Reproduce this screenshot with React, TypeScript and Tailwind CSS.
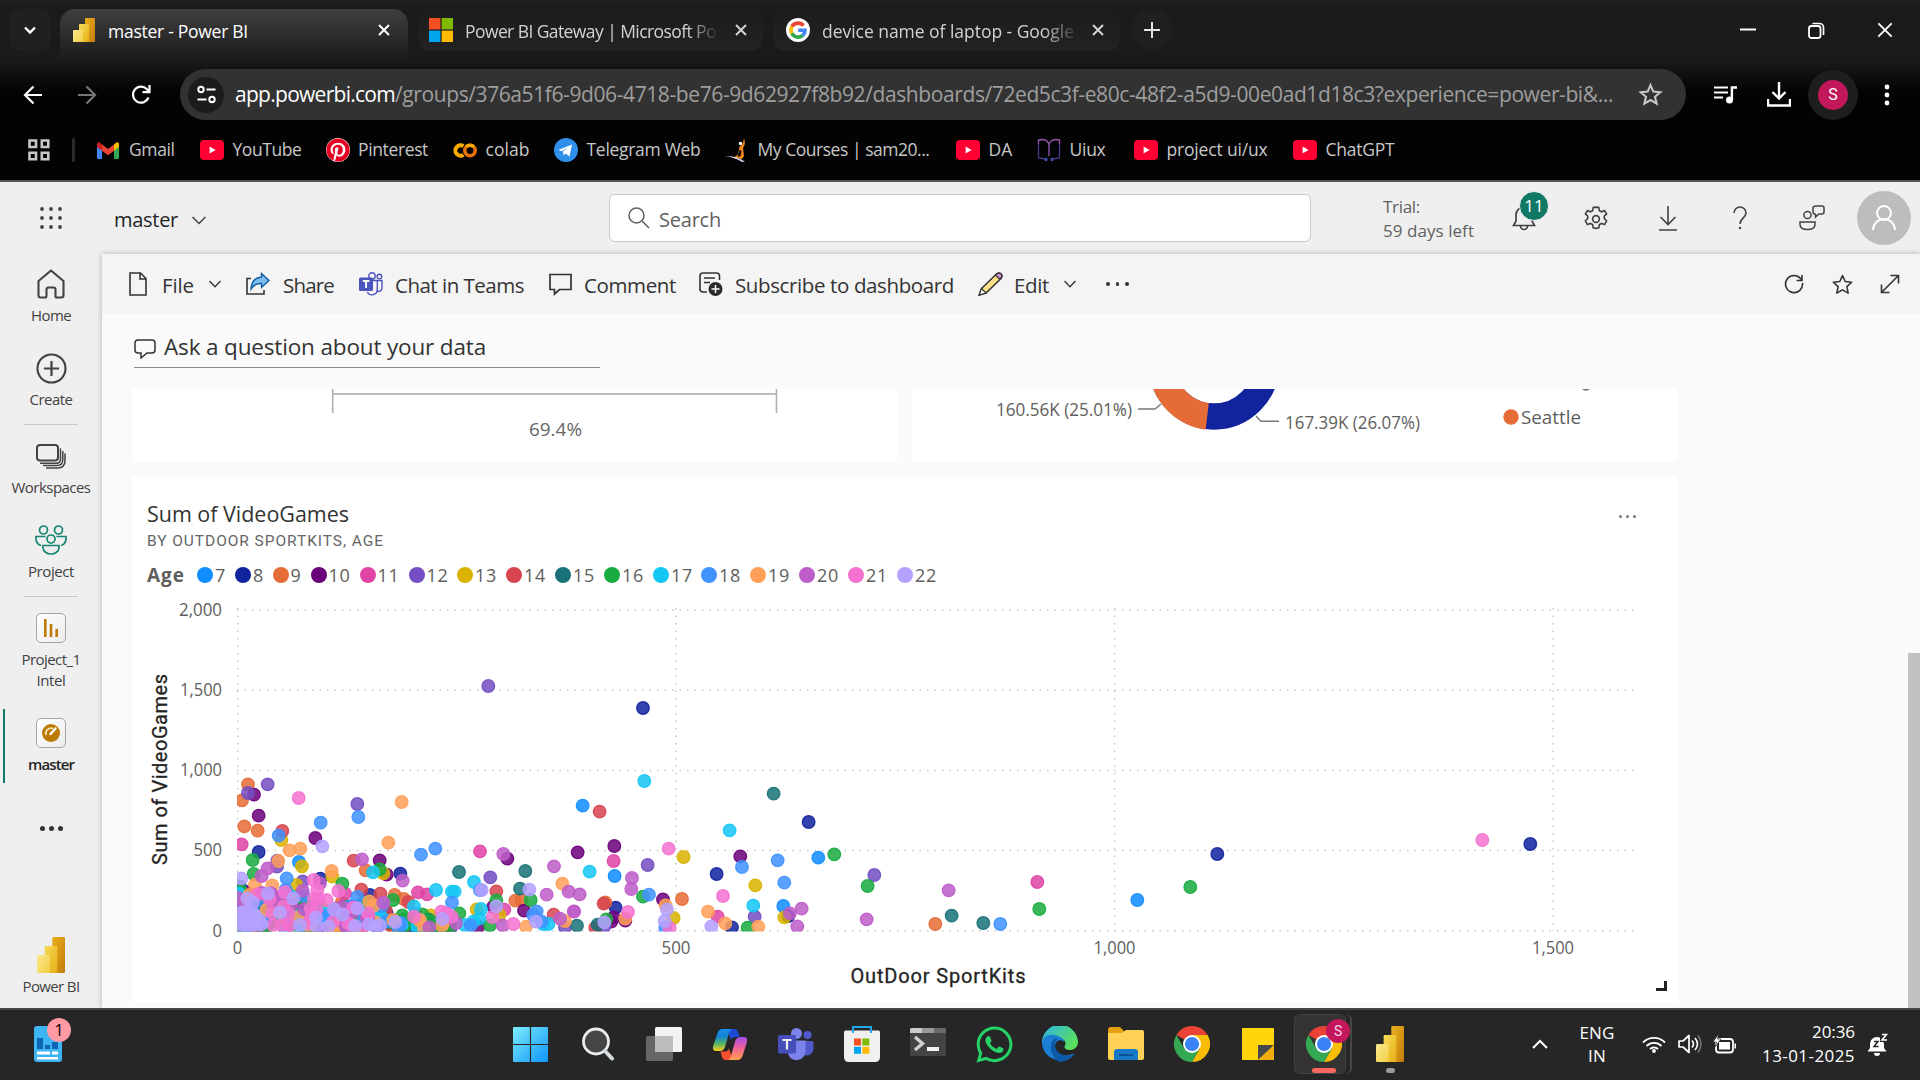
import React, { useLayoutEffect, useRef, useState } from "react";
import { FaPinterest, FaWhatsapp } from "react-icons/fa";

/* Text set to an exact advance width by spreading the difference over its letters. */
function Fit({ w, className = "", children }: { w: number; className?: string; children: string }) {
  const ref = useRef<HTMLSpanElement>(null);
  const [spacing, setSpacing] = useState(0);
  useLayoutEffect(() => {
    if (ref.current) setSpacing((w - ref.current.getBoundingClientRect().width) / children.length);
  }, []);
  return (
    <span className={"block shrink-0 whitespace-nowrap " + className} style={{ width: w }}>
      <span ref={ref} style={{ letterSpacing: spacing }}>{children}</span>
    </span>
  );
}

type IconProps = { size?: number; w?: number; h?: number; vb?: string; className?: string; children: React.ReactNode };
function Icon({ size = 24, w, h, vb = "0 0 24 24", className = "", children }: IconProps) {
  return (
    <svg width={w ?? size} height={h ?? size} viewBox={vb} className={"block shrink-0 " + className} fill="none" stroke="currentColor" strokeWidth="1.6">
      {children}
    </svg>
  );
}

function PowerBI({ w, h, className = "" }: { w: number; h: number; className?: string }) {
  return (
    <svg width={w} height={h} viewBox="0 0 22 28" preserveAspectRatio="none" className={"block shrink-0 " + className}>
      <defs>
        <linearGradient id="pb1" x1="0" y1="0" x2="1" y2="1"><stop stopColor="#e9b01b" /><stop offset="1" stopColor="#c47b0c" /></linearGradient>
        <linearGradient id="pb2" x1="0" y1="0" x2="1" y2="1"><stop stopColor="#f7db57" /><stop offset="1" stopColor="#e5ad16" /></linearGradient>
        <linearGradient id="pb3" x1="0" y1="0" x2="1" y2="1"><stop stopColor="#fae98e" /><stop offset="1" stopColor="#f2cf45" /></linearGradient>
      </defs>
      <rect x="12" width="10" height="28" rx="1" fill="url(#pb1)" />
      <path d="M7 7h8q1 0 1 1v20H6V8q0-1 1-1z" fill="url(#pb2)" />
      <path d="M1 14h8q1 0 1 1v13H1q-1 0-1-1V15q0-1 1-1z" fill="url(#pb3)" />
    </svg>
  );
}

function MsLogo({ size, className = "" }: { size: number; className?: string }) {
  return (
    <svg width={size} height={size} viewBox="0 0 24 24" className={"block shrink-0 " + className}>
      <path fill="#f25022" d="M0 0h11.4v11.4H0z" /><path fill="#7fba00" d="M12.6 0H24v11.4H12.6z" />
      <path fill="#00a4ef" d="M0 12.6h11.4V24H0z" /><path fill="#ffb900" d="M12.6 12.6H24V24H12.6z" />
    </svg>
  );
}

function GoogleG({ className = "" }) {
  return (
    <svg width="24" height="24" viewBox="0 0 24 24" className={"block shrink-0 " + className}>
      <circle cx="12" cy="12" r="12" fill="#fff" />
      <g fill="none" strokeWidth="3.6">
        <path d="M17.4 7.6A7.1 7.1 0 0 0 5.9 8.6" stroke="#ea4335" />
        <path d="M5.9 8.5a7.1 7.1 0 0 0 0 7" stroke="#fbbc05" />
        <path d="M5.9 15.4a7.1 7.1 0 0 0 10.9 2" stroke="#34a853" />
        <path d="M16.7 17.5A7 7 0 0 0 19 12.2h-6.8" stroke="#4285f4" />
      </g>
    </svg>
  );
}

function Chrome({ size }: { size: number }) {
  return (
    <svg width={size} height={size} viewBox="0 0 48 48" className="block shrink-0">
      <path d="M24 24 3.2 12A24 24 0 0 1 44.8 12z" fill="#ea4335" />
      <path d="M24 12H44.8A24 24 0 0 1 24 48L34.4 30z" fill="#fbbc04" />
      <path d="M3.2 12A24 24 0 0 0 24 48L34.4 30 24 34 13.6 30z" fill="#34a853" />
      <circle cx="24" cy="24" r="12" fill="#fff" /><circle cx="24" cy="24" r="9.4" fill="#3b82f6" />
    </svg>
  );
}

function YouTube() {
  return (
    <svg width="24" height="20" viewBox="0 0 24 20" className="block shrink-0">
      <rect width="24" height="20" rx="4" fill="#ff0033" /><path d="m9.6 6.500 6 3.500-6 3.500z" fill="#fff" />
    </svg>
  );
}

function TeamsGlyph({ size, tone = "#4b53bc" }: { size: number; tone?: string }) {
  return (
    <svg width={size} height={size} viewBox="0 0 24 24" className="block shrink-0">
      <g fill="none" stroke={tone} strokeWidth="1.4">
        <circle cx="13" cy="4" r="3.2" /><circle cx="20.4" cy="4.6" r="2.3" />
        <path d="M14 8.5h4.3v9a5.3 5.3 0 0 1-10 2.5M18.3 8.5H23V16a3.5 3.5 0 0 1-4.7 3.2" />
      </g>
      <rect y="5.5" width="14" height="13.5" rx="1.5" fill={tone} />
      <path d="M3.8 9h6.600M7.100 9v7" stroke="#fff" strokeWidth="1.9" />
    </svg>
  );
}

/* ---------------------------------------------------------------- browser */

const X = ({ size = 12, sw = 2 }) => (
  <Icon size={size} vb="0 0 12 12"><path d="m1 1 10 10M11 1 1 11" strokeWidth={sw} /></Icon>
);

function TabStrip() {
  return (
    <div className="flex h-[60px] items-start pt-[9px] text-[17.5px] leading-[45px]">
      <div className="ml-[9px] flex h-[42px] w-[42px] items-center justify-center rounded-xl bg-[#202020] text-white">
        <Icon w={14} h={9} vb="0 0 14 9"><path d="m2 1.500 5 5 5-5" strokeWidth="2.4" /></Icon>
      </div>
      <div className="ml-[9px] flex h-[51px] w-[348px] rounded-t-[15px] bg-gradient-to-b from-[#404040] to-[#1b1b1b]">
        <PowerBI w={22} h={24} className="ml-[13px] mt-[9px]" />
        <Fit w={140} className="ml-[13px] text-white">master - Power BI</Fit>
        <div className="ml-[130px] mt-[15px] text-white"><X /></div>
      </div>
      <div className="ml-[10px] flex h-[42px] w-[345px] rounded-xl bg-gradient-to-b from-[#1c1c1c] to-[#222] text-[#d2d2d2]">
        <MsLogo size={24} className="ml-[11px] mt-[9px]" />
        <div className="ml-3 w-[252px] [mask-image:linear-gradient(to_right,black_222px,transparent_254px)]">
          <Fit w={251}>Power BI Gateway | Microsoft Po</Fit>
        </div>
        <div className="ml-[18px] mt-[15px]"><X /></div>
      </div>
      <div className="ml-[10px] flex h-[42px] w-[347px] rounded-xl bg-gradient-to-b from-[#1c1c1c] to-[#222] text-[#d2d2d2]">
        <GoogleG className="ml-[13px] mt-[9px]" />
        <div className="ml-3 w-[254px] [mask-image:linear-gradient(to_right,black_220px,transparent_258px)]">
          <Fit w={252}>device name of laptop - Google</Fit>
        </div>
        <div className="ml-[16px] mt-[15px]"><X /></div>
      </div>
      <div className="ml-[12px] flex h-[42px] w-[40px] items-center justify-center rounded-full bg-[#1f1f1f] text-[#e3e3e3]">
        <Icon size={16} vb="0 0 16 16"><path d="M8 0v16M0 8h16" strokeWidth="2" /></Icon>
      </div>
      <div className="ml-auto mr-[27px] flex h-[42px] items-center text-white">
        <Icon size={16} vb="0 0 16 16" className="mr-[52px]"><path d="M0 7.500h16" strokeWidth="2" /></Icon>
        <Icon size={17} vb="0 0 17 17" className="mr-[52px]">
          <rect x="1" y="4" width="11.5" height="12" rx="2.5" strokeWidth="1.8" />
          <path d="M4.500 1.500h7a4 4 0 0 1 4 4V13" strokeWidth="1.7" />
        </Icon>
        <X size={16} sw={1.4} />
      </div>
    </div>
  );
}

function Toolbar() {
  return (
    <div className="mt-[9px] flex h-[51px] items-center text-white">
      <Icon size={20} vb="0 0 20 20" className="ml-[23px]"><path d="M19 10H2m8.500-8.500L2 10l8.500 8.500" strokeWidth="2.2" /></Icon>
      <Icon size={20} vb="0 0 20 20" className="ml-[34px] text-[#757575]"><path d="M1 10h17M9.500 1.500 18 10l-8.500 8.500" strokeWidth="2.2" /></Icon>
      <Icon size={20} vb="0 0 20 20" className="ml-[34px]"><path d="M17.500 12.500a8 8 0 1 1-1.600-8.300L18 6.500M18.500 0v7.200h-7" strokeWidth="2.2" /></Icon>
      <div className="ml-[29px] flex h-[51px] w-[1506px] items-center rounded-full bg-[#323232]">
        <div className="ml-2 flex h-9 w-9 items-center justify-center rounded-full bg-[#1c1c1c]">
          <Icon size={19} vb="0 0 19 19"><g strokeWidth="2"><circle cx="4" cy="4.5" r="2.7" /><path d="M9.500 4.500h9M.5 14.500h9" /><circle cx="15" cy="14.5" r="2.7" /></g></Icon>
        </div>
        <Fit w={160} className="ml-[11px] pt-px text-[21px]">app.powerbi.com</Fit>
        <Fit w={1218} className="pt-px text-[21px] text-[#9e9e9e]">/groups/376a51f6-9d06-4718-be76-9d62927f8b92/dashboards/72ed5c3f-e80c-48f2-a5d9-00e0ad1d18c3?experience=power-bi&...</Fit>
        <Icon size={25} className="ml-[25px] text-[#c7c7c7]"><path d="m12 3 2.700 6.200 6.700.6-5.100 4.400 1.600 6.600L12 17.300l-5.900 3.500 1.600-6.600-5.100-4.400 6.700-.6z" strokeWidth="2" /></Icon>
      </div>
      <Icon w={24} h={20} vb="0 0 24 20" className="ml-[28px]">
        <path d="M0 2.500h14M0 7.500h14M0 12.500h9" strokeWidth="2.2" /><circle cx="15.5" cy="15" r="3.5" fill="currentColor" stroke="none" /><path d="M17.900 15V2.500H23" strokeWidth="2.4" />
      </Icon>
      <Icon w={24} h={25} vb="0 0 24 25" className="ml-[29px]"><path d="M12 0v16M5.500 10 12 16.500 18.500 10M1 17v6.500h22V17" strokeWidth="2.4" /></Icon>
      <div className="ml-[17px] flex h-[50px] w-[50px] items-center justify-center rounded-full bg-[#1e1e1e]">
        <div className="flex h-[30px] w-[30px] items-center justify-center rounded-full bg-[#c2185b] font-[Roboto] text-[16px]">S</div>
      </div>
      <Icon w={6} h={22} vb="0 0 6 22" className="ml-[26px]"><g fill="currentColor" stroke="none"><circle cx="3" cy="3" r="2.4" /><circle cx="3" cy="11" r="2.4" /><circle cx="3" cy="19" r="2.4" /></g></Icon>
    </div>
  );
}

function Bookmark({ ml, gap, w, icon, children }: { ml: number; gap: number; w: number; icon: React.ReactNode; children: string }) {
  return (
    <div className="flex shrink-0 items-center" style={{ marginLeft: ml, gap }}>
      {icon}
      <Fit w={w} className="pb-0.5">{children}</Fit>
    </div>
  );
}

function Bookmarks() {
  return (
    <div className="flex h-[60px] items-center text-[17.5px] text-[#c7c7c7]">
      <Icon size={22} vb="0 0 22 22" className="ml-7"><g strokeWidth="2.6"><path d="M1.500 1.500h6.500V8H1.500zM13.800 1.500h6.500V8h-6.500zM1.500 13.800h6.500v6.500H1.500zM13.800 13.800h6.500v6.500h-6.500z" /></g></Icon>
      <div className="ml-[22px] h-6 w-[3px] rounded bg-[#2b2b2b]" />
      <Bookmark ml={22} gap={10} w={45.5} icon={
        <svg width="22" height="17" viewBox="0 0 22 17"><path d="M0 2v13.500Q0 17 1.500 17H5V7z" fill="#4285f4" /><path d="M22 2v13.500q0 1.500-1.500 1.500H17V7z" fill="#34a853" /><path d="M17 2.500 19 .8q3-1.500 3 2V5l-5 3.700z" fill="#fbbc04" /><path d="M5 8.700V2.500l6 4.600 6-4.600v6.200l-6 4.600z" fill="#ea4335" /><path d="M0 5V2.800q0-3.500 3-2l2 1.700v6.200z" fill="#c5221f" /></svg>
      }>Gmail</Bookmark>
      <Bookmark ml={25.5} gap={8.5} w={69} icon={<YouTube />}>YouTube</Bookmark>
      <Bookmark ml={24} gap={8.5} w={70} icon={<div className="rounded-full bg-white"><FaPinterest size={24} color="#e60023" /></div>}>Pinterest</Bookmark>
      <Bookmark ml={24.5} gap={9} w={44} icon={
        <Icon w={24} h={15} vb="0 0 24 15"><path d="M10.500 3.200a5.200 5.200 0 1 0 0 8.600" stroke="#f9ab00" strokeWidth="4" /><circle cx="17" cy="7.5" r="5.2" stroke="#e8710a" strokeWidth="3.6" /><path d="M13.300 3.800a5.200 5.200 0 0 1 7.400 0" stroke="#f9ab00" strokeWidth="3.6" /></Icon>
      }>colab</Bookmark>
      <Bookmark ml={24.5} gap={8.5} w={114} icon={
        <svg width="24" height="24" viewBox="0 0 24 24"><circle cx="12" cy="12" r="12" fill="#2f8feb" /><path d="m4.500 12 13.500-5.500-2.500 12-4-3-2 2-.5-4 5-4-6.500 3.700z" fill="#fff" /></svg>
      }>Telegram Web</Bookmark>
      <Bookmark ml={24} gap={9} w={172} icon={
        <svg width="24" height="24" viewBox="0 0 24 24"><path d="M19 0q2 6-1 10l1 8-2 3-9-1 5-3.500 1.500-8q3-1 3.500-4z" fill="#f0851c" /><path d="m14.500 12 2 1-1 5-3 1z" fill="#050505" /><circle cx="15.5" cy="5.5" r="1.7" fill="#fff" /><path d="M0 18.500q10-1 20 5l-3 .5Q8 18.500 0 18.500z" fill="#d5d0ee" /></svg>
      }>My Courses | sam20...</Bookmark>
      <Bookmark ml={26} gap={9} w={24} icon={<YouTube />}>DA</Bookmark>
      <Bookmark ml={24} gap={9} w={36} icon={
        <Icon size={24}><g strokeWidth="1.3"><path d="M9 21 1.500 20V2Q9 0 12 6q3-6 10.500-4v18L15 21" stroke="#4a3a8a" /><path d="M12 6v12" stroke="#7d4d9c" strokeWidth="1.5" /><path d="M1.500 6V2Q9 0 12 6q3-6 10.500-4v4" stroke="#8a4f98" /><circle cx="9" cy="21.5" r="1" stroke="#3f51b5" /><circle cx="15" cy="21.5" r="1" stroke="#3f51b5" /></g></Icon>
      }>Uiux</Bookmark>
      <Bookmark ml={28} gap={9} w={101} icon={<YouTube />}>project ui/ux</Bookmark>
      <Bookmark ml={25} gap={9} w={69} icon={<YouTube />}>ChatGPT</Bookmark>
    </div>
  );
}

/* ---------------------------------------------------------------- Power BI */

function AppHeader() {
  return (
    <header className="flex h-[72px] items-center text-[#424242]">
      <Icon size={22} vb="0 0 22 22" className="ml-10">
        <g fill="currentColor" stroke="none">
          {[2, 11, 20].map((y) => [2, 11, 20].map((x) => <circle key={x + "-" + y} cx={x} cy={y} r="1.9" />))}
        </g>
      </Icon>
      <Fit w={64} className="ml-[52px] pt-1 text-[20px] text-[#242424]">master</Fit>
      <Icon w={14} h={9} vb="0 0 14 9" className="ml-[14px] mt-1"><path d="m.6 1 6.400 6.500L13.400 1" strokeWidth="1.5" /></Icon>
      <div className="ml-[403px] flex h-[48px] w-[702px] items-center rounded-[6px] border border-[#c9c9c9] bg-white text-[#616161]">
        <Icon size={22} vb="0 0 22 22" className="ml-[18px]"><circle cx="8.5" cy="8.5" r="7.5" strokeWidth="1.5" /><path d="m14 14 7 7" strokeWidth="1.6" /></Icon>
        <Fit w={62} className="ml-[9px] pt-1 text-[20px]">Search</Fit>
      </div>
      <div className="ml-[72px] w-[92px] pt-0.5 text-[17px] leading-6 text-[#616161]">
        <Fit w={37}>Trial:</Fit>
        <Fit w={91}>59 days left</Fit>
      </div>
      <div className="relative ml-[36px]">
        <Icon w={26} h={30} vb="0 0 26 30"><path d="M2.500 22.500 5 18v-6a8 8 0 0 1 16 0v6l2.500 4.500zM9.500 23a3.500 3.500 0 0 0 7 0" strokeWidth="1.7" /></Icon>
        <div className="absolute left-[8px] top-[-12px] flex h-[30px] w-[30px] items-center justify-center rounded-full border border-[#f0f0f0] bg-[#117865] text-[17px] text-white">11</div>
      </div>
      <Icon size={28} className="ml-[45px] mt-px"><path strokeWidth="1.4" d="m12 1.800 2.400.3.500 2.700 1.800 1 2.500-1 1.900 2.800-2 2v2l2 2.100-1.700 3-2.600-.9-1.900 1-.5 2.800-2.400.4-2.400-.4-.5-2.800-1.900-1-2.600.9-1.700-3 2-2.100v-2l-2-2 1.900-2.800 2.500 1 1.800-1 .5-2.700z" /><circle cx="12" cy="12" r="2.9" strokeWidth="1.4" /></Icon>
      <Icon w={20} h={26} vb="0 0 20 26" className="ml-[48px]"><path d="M10 1v18M2.500 12l7.500 7.500 7.500-7.500M1 25h18" strokeWidth="1.6" /></Icon>
      <Icon w={14} h={24} vb="0 0 14 24" className="ml-[55px]"><path d="M1 7a6 6 0 0 1 12 0c0 4.500-6 5.500-6 11" strokeWidth="1.6" /><circle cx="7" cy="22" r="1.2" fill="currentColor" stroke="none" /></Icon>
      <Icon size={26} vb="0 0 26 26" className="ml-[52px]"><g strokeWidth="1.5"><circle cx="8.5" cy="10" r="3.6" /><path d="M1 17h15v2.500c0 3-3 5-7.500 5S1 22.500 1 19.500zM17 1h6q2 0 2 2v4q0 2-2 2h-3l-3.500 3V9.300Q14 9 14 7V3q0-2 3-2z" /></g></Icon>
      <div className="ml-[32px] flex h-[54px] w-[54px] items-center justify-center rounded-full bg-[#bdbdbd] text-white">
        <Icon w={24} h={26} vb="0 0 24 26"><circle cx="12" cy="8" r="7" strokeWidth="1.9" /><path d="M1 25a11 11 0 0 1 22 0" strokeWidth="1.9" /></Icon>
      </div>
    </header>
  );
}

function NavItem({ icon, label, w, className = "", bold = false }: { icon: React.ReactNode; label: string; w: number; className?: string; bold?: boolean }) {
  return (
    <div className={"flex w-[102px] flex-col items-center " + className}>
      <div className="flex h-8 items-center">{icon}</div>
      <Fit w={w} className={bold ? "text-[15px] leading-[30px] font-semibold text-[#242424]" : "text-[15px] leading-[30px]"}>{label}</Fit>
    </div>
  );
}

const Square = ({ children }: { children: React.ReactNode }) => (
  <div className="flex h-[30px] w-[30px] items-center justify-center rounded-[5px] border-[1.5px] border-[#a5a5a5] bg-gradient-to-br from-white to-[#ececec]">{children}</div>
);

function Sidebar() {
  return (
    <nav className="flex w-[102px] flex-col items-center pt-[14px] text-[#424242]">
      <NavItem w={40} label="Home" icon={<Icon size={30} vb="0 0 30 30" className="-mt-px"><path d="M2.500 12 15 1.500 27.500 12v14.500q0 2-2 2H21q-1.500 0-1.500-1.500v-6.500q0-2-2-2h-5q-2 0-2 2V27q0 1.500-1.500 1.500H4.500q-2 0-2-2z" strokeWidth="2.1" strokeLinejoin="round" /></Icon>} />
      <NavItem w={43} label="Create" className="mt-[22px]" icon={<Icon size={31} vb="0 0 31 31"><circle cx="15.5" cy="15.5" r="14" strokeWidth="2.1" /><path d="M15.500 8v15M8 15.500h15" strokeWidth="2.2" /></Icon>} />
      <div className="mt-[10px] h-px w-[54px] bg-[#c8c8c8]" />
      <NavItem w={79} label="Workspaces" className="mt-[15px]" icon={<Icon w={30} h={25} vb="0 0 30 25"><rect x="1" y="1" width="21" height="15.5" rx="3" strokeWidth="2" /><path d="M24.500 4.500v10.500q0 4.300-4 4.300H4M26.800 7v8.500q0 6-6 6H7M29 9.500v7q0 7.500-7.500 7.500H10" strokeWidth="1.5" /></Icon>} />
      <NavItem w={46} label="Project" className="mt-[22px]" icon={
        <Icon w={32} h={30} vb="0 0 32 30" className="text-[#168573]"><g strokeWidth="1.7"><circle cx="8.5" cy="5" r="4" /><circle cx="23.5" cy="5" r="4" /><circle cx="16" cy="14" r="4" /><path d="M8 20.500h16v2c0 4-4 6.500-8 6.500s-8-2.500-8-6.500zM10.500 11.500H1c-.5 4.500 1.500 8.500 5 9M21.500 11.500H31c.5 4.500-1.500 8.500-5 9" /></g></Icon>} />
      <div className="mt-[10px] h-px w-[54px] bg-[#c8c8c8]" />
      <div className="mt-[15px] flex flex-col items-center text-[15px] leading-[21px]">
        <div className="flex h-8 items-center"><Square><Icon w={14} h={18} vb="0 0 14 18" className="text-[#bd7a06]"><path d="M1.300 0v18M7 5v13M12.700 10v8" strokeWidth="2.6" /></Icon></Square></div>
        <Fit w={59} className="mt-[5px]">Project_1</Fit>
        <Fit w={29}>Intel</Fit>
      </div>
      <div className="relative mt-[26px]">
        <div className="absolute left-[3px] top-[-8px] h-[74px] w-[2px] bg-[#117865]" />
        <NavItem w={46} label="master" bold icon={<Square><Icon size={18} vb="0 0 18 18"><circle cx="9" cy="9" r="9" fill="#bd7a06" stroke="none" /><path d="M4 11A5.300 5.300 0 0 1 11 4.500" stroke="#f8e6b5" strokeWidth="1.7" /><path d="M13.500 4.500 8.500 10" stroke="#fff" strokeWidth="2.4" strokeLinecap="round" /></Icon></Square>} />
      </div>
      <div className="mt-10 flex h-[18px] items-center gap-[4px]">
        <i className="h-[5px] w-[5px] rounded-full bg-[#333]" /><i className="h-[5px] w-[5px] rounded-full bg-[#333]" /><i className="h-[5px] w-[5px] rounded-full bg-[#333]" />
      </div>
      <PowerBI w={28} h={36} className="mt-[100px]" />
      <Fit w={57} className="text-[15px] leading-[26px]">Power BI</Fit>
    </nav>
  );
}

const Caret = ({ className = "" }) => (
  <Icon w={12} h={8} vb="0 0 12 8" className={className}><path d="m.5 1 5.500 5.700L11.500 1" strokeWidth="1.3" /></Icon>
);

function CommandBar() {
  return (
    <div className="flex h-[60px] items-center bg-[#f4f4f4] text-[20.5px] text-[#333]">
      <Icon w={18} h={24} vb="0 0 18 24" className="ml-[27px]"><path d="M1 1h10.500L17 6.500V23H1zM11 1v6h6" strokeWidth="1.6" /></Icon>
      <Fit w={32} className="ml-[15px] pt-[3px]">File</Fit>
      <Caret className="ml-[15px]" />
      <Icon w={24} h={24} vb="0 0 24 24" className="ml-[25px]"><path d="M5 6.500H1V22h17v-4" strokeWidth="1.6" /><path d="M15.500 1.500 23 8.500l-7.500 7v-4C11 11 8 12.500 5 17c.5-7 4-11.500 10.500-12z" fill="#7fbcf0" stroke="#0f5ea3" strokeWidth="1.4" /></Icon>
      <Fit w={51} className="ml-[13px] pt-[3px]">Share</Fit>
      <div className="ml-[25px]"><TeamsGlyph size={24} /></div>
      <Fit w={129} className="ml-3 pt-[3px]">Chat in Teams</Fit>
      <Icon w={23} h={24} vb="0 0 23 24" className="ml-[25px]"><path d="M1 2.500h21v15H10.500L5.500 22v-4.500H1z" strokeWidth="1.7" /></Icon>
      <Fit w={92} className="ml-3 pt-[3px]">Comment</Fit>
      <Icon w={24} h={24} vb="0 0 24 24" className="ml-[23px]"><path d="M20.500 8V4q0-3-3-3H4Q1 1 1 4v13q0 3 3 3h4M5 6h11M5 10.500h6" strokeWidth="1.6" /><circle cx="16.5" cy="17" r="7" fill="#2b2b2b" stroke="none" /><path d="M16.500 13v8M12.500 17h8" stroke="#fff" strokeWidth="1.5" /></Icon>
      <Fit w={219} className="ml-3 pt-[3px]">Subscribe to dashboard</Fit>
      <Icon w={25} h={24} vb="0 0 25 24" className="ml-6"><path d="m3.500 16.500 15-14.500q2.500-2 4.500 0t0 4.500L8 21l-6.800 2z" fill="#ffe08a" stroke="#333" strokeWidth="1.5" /><path d="m17.500 3 1.500-1.200q2.200-1.500 4 0t0 4l-1.200 1.500z" fill="#d495dc" stroke="#333" strokeWidth="1.3" /><path d="m3.500 16.500 4.500 4.500-6.800 2z" fill="#fff" stroke="#333" strokeWidth="1.2" /></Icon>
      <Fit w={35} className="ml-[11px] pt-[3px]">Edit</Fit>
      <Caret className="ml-[15px]" />
      <div className="ml-[30px] flex gap-[6px]"><i className="h-[3.5px] w-[3.5px] rounded-full bg-[#333]" /><i className="h-[3.5px] w-[3.5px] rounded-full bg-[#333]" /><i className="h-[3.5px] w-[3.5px] rounded-full bg-[#333]" /></div>
      <Icon size={20} vb="0 0 20 20" className="ml-auto mr-[28px]"><path d="M18.500 9a8.500 8.500 0 1 1-2-4.500L18 6M18 1v5.500h-5.500" strokeWidth="1.6" /></Icon>
      <Icon size={21} vb="0 0 24 24" className="mr-[27px]"><path d="m12 1.800 3.100 6.800 7.400.8-5.500 5 1.500 7.400-6.500-3.700-6.500 3.700L7 14.400l-5.500-5 7.400-.8z" strokeWidth="1.8" strokeLinejoin="round" /></Icon>
      <Icon size={20} vb="0 0 20 20" className="mr-5"><path d="M2 18 18 2M10.500 1.500h8v8M1.500 10.500v8h8" strokeWidth="1.6" /></Icon>
    </div>
  );
}

const AGES: [number, string, number][] = [
  [7, "#118DFF", 205], [8, "#12239E", 243], [9, "#E66C37", 280.5], [10, "#6B007B", 318.5], [11, "#E044A7", 367.5], [12, "#744EC2", 416.5],
  [13, "#D9B300", 465], [14, "#D64550", 514], [15, "#197278", 563], [16, "#1AAB40", 612], [17, "#15C6F4", 661], [18, "#4092FF", 709],
  [19, "#FFA058", 758], [20, "#BE5DC9", 807], [21, "#F472D0", 856], [22, "#B5A1FF", 905],
];

type P = [number, number, number];

/* Readings near the origin: thirds of a pixel from (220, 740), then the age. */
const NEAR: P[] = [
  [84,133,9],[143,133,12],[84,159,12],[102,164,10],[66,181,9],[236,174,21],[412,192,12],[415,231,18],[545,186,19],[116,227,10],[73,259,9],[113,272,9],
  [302,248,18],[187,273,14],[176,287,18],[184,300,13],[286,294,10],[307,319,22],[505,308,19],[65,313,11],[116,336,8],[209,331,19],[241,326,19],[603,344,18],
  [646,326,18],[780,334,11],[850,342,20],[862,356,10],[98,360,16],[171,380,12],[172,362,12],[175,363,19],[237,366,7],[246,379,13],[143,385,20],[101,402,16],
  [125,408,20],[64,415,22],[105,434,19],[157,436,19],[200,415,18],[197,449,18],[229,435,13],[248,424,12],[335,393,19],[337,410,13],[301,416,8],[281,420,21],
  [401,362,14],[426,358,20],[479,361,10],[437,391,9],[459,397,17],[479,388,16],[490,400,13],[500,404,10],[541,401,8],[548,422,20],[717,396,15],[762,426,17],
  [811,412,12],[916,393,15],[1002,379,20],[1027,431,19],[248,452,20],[292,450,21],[300,430,20],[367,431,16],[355,453,21],[375,460,11],[424,449,14],[412,471,18],
  [448,484,19],[450,465,8],[481,461,14],[490,488,20],[519,480,16],[524,465,9],[551,477,9],[565,486,14],[582,499,17],[594,457,11],[621,463,11],[648,450,17],
  [704,455,17],[696,455,17],[696,488,18],[785,450,22],[780,450,18],[829,454,14],[829,481,16],[829,499,22],[900,446,15],[928,449,22],[980,464,20],
  [886,482,9],[905,480,9],[932,480,16],[912,512,10],[950,514,18],[948,545,22],[1001,524,14],[1020,536,20],[1062,515,20],[1035,543,19],[1035,562,12],
  [547,526,16],[526,546,22],[520,540,19],[582,530,21],[587,520,11],[607,523,16],[632,526,13],[664,515,21],[667,537,22],[666,557,19],[680,520,21],[695,530,21],
  [718,520,16],[708,549,20],[690,560,16],[628,562,20],[640,550,10],[592,558,17],[555,556,16],[752,556,18],[760,545,17],[770,508,13],[783,507,17],[778,535,17],
  [820,500,10],[818,531,21],[838,525,13],[853,509,11],[810,556,16],[848,556,20],[880,552,21],[918,560,19],[775,560,10],[735,555,17],[970,552,17],[985,552,17],[965,545,18],[940,525,18],
  [82,475,22],[98,487,22],[144,461,22],[220,475,22],[180,517,22],[288,533,22],[342,508,22],[368,523,22],[412,505,22],[240,555,22],[290,560,22],[325,560,22],
  [405,558,22],[447,553,22],[480,556,22],[465,560,22],[282,476,21],[320,480,21],[190,500,21],[205,520,21],[160,555,21],[185,555,21],[210,555,21],[340,545,21],
  [385,550,21],[395,555,21],[445,520,21],[295,475,21],[478,535,17],[520,560,13],[430,545,18],[300,500,10],[322,520,17],[232,528,17],[262,548,19],[346,558,19],
  [260,512,7],[210,480,19],[140,510,19],[155,488,13],[240,475,15],[225,500,10],[380,500,16],[365,488,9],[430,488,16],[500,520,8],[510,555,14],[470,500,12],
  [60,520,22],[75,515,22],[90,520,22],[105,525,22],[118,540,22],[124,552,22],[60,545,22],[75,540,22],[90,545,22],[105,550,22],[65,565,22],[85,565,22],[108,567,22],[60,440,15],[62,455,16],[66,468,11],[60,490,17],[66,500,9],
];

/* Readings around 500 sport kits: thirds of a pixel from (560, 660), then the age. */
const MID: P[] = [
  [248,144,8],[252,363,17],[67,437,7],[118,455,14],[640,401,15],[745,486,8],[508,511,17],[52,577,10],[162,558,10],[160,603,11],[325,566,21],[370,591,13],
  [540,589,10],[545,621,18],[652,601,18],[774,593,7],[822,583,16],[88,635,17],[262,615,12],[163,648,7],[215,654,20],[213,687,20],[248,710,16],[266,704,18],
  [308,718,10],[365,717,9],[469,642,8],[585,676,13],[672,668,18],[488,708,21],[942,645,12],[922,678,16],[1165,691,20],[919,778,20],[1174,767,15],[1125,792,9],
  [25,695,20],[58,703,20],[41,754,20],[50,797,15],[135,727,9],[130,731,14],[166,743,8],[160,772,10],[153,785,10],[195,782,10],[195,776,19],[203,756,21],
  [138,778,16],[112,794,15],[132,787,22],[105,803,14],[132,800,12],[316,736,19],[320,749,22],[340,774,13],[313,783,22],[315,803,18],[328,804,21],[443,755,19],
  [472,770,11],[495,790,19],[515,802,8],[453,799,22],[579,737,17],[583,770,12],[562,803,16],[594,800,19],[669,738,7],[672,772,13],[684,768,8],[689,760,20],[724,746,20],[711,799,20],
  [-216,78,12],[1431,666,11],[1437,747,16],[1269,789,15],[1320,792,18],[1731,720,7],[1890,681,16],[1971,582,8],[2766,540,21],[2910,552,8],
];

/* The crowd along the base line, too dense to be listed one by one. */
const CROWD: P[] = (() => {
  let s = 7;
  const rnd = () => (s = (s * 16807) % 2147483647) / 2147483647;
  return Array.from({ length: 270 }, (): P => {
    const x = 54 + 640 * Math.pow(rnd(), 1.3);
    const top = x < 260 ? 455 : x < 500 ? 495 : 535;
    return [x, 572 - (572 - top) * rnd(), 7 + Math.floor(rnd() * (x < 500 ? 15 : 13))];
  });
})();

const POINTS: P[] = [
  ...[...NEAR, ...CROWD].map(([x, y, a]): P => [220 + x / 3, 740 + y / 3, a]),
  ...MID.map(([x, y, a]): P => [560.3 + x / 3, 660 + y / 3, a]),
].sort((a, b) => a[2] - b[2]);

function Scatter() {
  return (
    <svg width="1545" height="407" viewBox="132 595 1545 407" className="block">
      <clipPath id="plot"><rect x="237" y="600" width="1400" height="331.5" /></clipPath>
      <g stroke="#c8c8c8" strokeWidth="1.5" strokeDasharray="1.5 6">
        {[610, 690, 770.5, 850.5, 930.8].map((y) => <path key={y} d={`M237 ${y}H1636`} />)}
        {[237.7, 676, 1114.5, 1553].map((x) => <path key={x} d={`M${x} 608V931`} />)}
      </g>
      <g clipPath="url(#plot)" fillOpacity="0.86" strokeWidth="1.3">
        {POINTS.map(([x, y, a], i) => <circle key={i} cx={x} cy={y} r="6.3" fill={AGES[a - 7][1]} stroke={AGES[a - 7][1]} strokeOpacity="0.9" />)}
      </g>
      <g fill="#605e5c" fontSize="17.5" fontFamily="Open Sans, sans-serif">
        {([["2,000", 616, 43], ["1,500", 696, 42], ["1,000", 776, 42], ["500", 856, 28.5], ["0", 937, 9.5]] as [string, number, number][]).map(([t, y, w]) => (
          <text key={t} x="222" y={y} textAnchor="end" textLength={w} lengthAdjust="spacingAndGlyphs">{t}</text>
        ))}
        {([["0", 237.5, 9.5], ["500", 676, 29], ["1,000", 1114.5, 42], ["1,500", 1553, 42]] as [string, number, number][]).map(([t, x, w]) => (
          <text key={t} x={x} y="954" textAnchor="middle" textLength={w} lengthAdjust="spacingAndGlyphs">{t}</text>
        ))}
      </g>
      <g fill="#252423" stroke="#252423" strokeWidth="0.3" fontSize="20" fontFamily="Roboto, sans-serif" textAnchor="middle">
        <text x="938" y="983" textLength="175">OutDoor SportKits</text>
        <text transform="translate(166.5 769.5) rotate(-90)" textLength="191">Sum of VideoGames</text>
      </g>
      <path d="M1656 989.500h9.500V981" fill="none" stroke="#222" strokeWidth="3" />
    </svg>
  );
}

function LegendEntry({ age, color, next }: { age: number; color: string; next: number }) {
  return (
    <div className="flex shrink-0 items-center gap-[2px]" style={{ width: next }}>
      <i className="h-4 w-4 shrink-0 rounded-full" style={{ background: color }} />
      <Fit w={age > 9 ? 22 : 10.5}>{String(age)}</Fit>
    </div>
  );
}

function ScatterTile() {
  return (
    <section className="mt-[15px] flex h-[525px] w-[1545px] flex-col bg-white">
      <div className="flex h-[51px] items-end justify-between pl-[15px] pr-[41px]">
        <Fit w={202} className="text-[21.5px] leading-[28px] text-[#333]">Sum of VideoGames</Fit>
        <div className="mb-[10px] flex gap-[4px]"><i className="h-[3px] w-[3px] rounded-full bg-[#777]" /><i className="h-[3px] w-[3px] rounded-full bg-[#777]" /><i className="h-[3px] w-[3px] rounded-full bg-[#777]" /></div>
      </div>
      <Fit w={237} className="ml-[15px] font-[Roboto] text-[15.5px] leading-[26px] text-[#666]">BY OUTDOOR SPORTKITS, AGE</Fit>
      <div className="ml-[15px] flex h-[41px] items-center pt-px text-[18px] text-[#605e5c]">
        <Fit w={38} className="mr-3 text-[19px] font-bold">Age</Fit>
        {AGES.map(([age, color, x], i) => <LegendEntry key={age} age={age} color={color} next={(AGES[i + 1]?.[2] ?? 950) - x} />)}
      </div>
      <Scatter />
    </section>
  );
}

function Dashboard() {
  return (
    <div className="flex h-[694px] bg-[#fafafa]">
      <div className="w-[1806px] pl-[30px]">
        <div className="ml-0.5 flex h-[54px] w-[466px] items-center border-b-[1.5px] border-[#8a8a8a] pt-3 text-[#333]">
          <Icon w={22} h={20} vb="0 0 22 20" className="mt-1"><path d="M4 1h14q3 0 3 3v7q0 3-3 3h-5l-6 5v-5H4q-3 0-3-3V4q0-3 3-3z" strokeWidth="1.5" /></Icon>
          <Fit w={322} className="ml-2 text-[22.5px]">Ask a question about your data</Fit>
        </div>
        <div className="mt-[21px] flex h-[73px] gap-[15px]">
          <svg width="765" height="73" viewBox="132 389 765 73" className="block bg-white">
            <path d="M332.700 389v24M776.500 389v24" stroke="#b3b0ad" strokeWidth="1.6" />
            <path d="M333 394h443" stroke="#c0bebb" strokeWidth="2" />
            <text x="529" y="435.5" textLength="53" lengthAdjust="spacingAndGlyphs" fontSize="18.5" fontFamily="Open Sans, sans-serif" fill="#666">69.4%</text>
          </svg>
          <svg width="765" height="73" viewBox="912 389 765 73" className="block bg-white">
            <circle cx="1214" cy="364.4" r="52.1" fill="none" stroke="#12239E" strokeWidth="26.4" />
            <path d="M1208.800 403.100A39 39 0 0 1 1175 364.400H1148.700A65.300 65.300 0 0 0 1205.700 429.600z" fill="#E66C37" />
            <path d="M1138 409h17l6-5M1256 416l5 5.300h18" fill="none" stroke="#777" strokeWidth="1.4" />
            <g fontFamily="Open Sans, sans-serif" fill="#605e5c">
              <text x="996" y="416" textLength="136" lengthAdjust="spacingAndGlyphs" fontSize="17.5">160.56K (25.01%)</text>
              <text x="1285" y="429" textLength="135" lengthAdjust="spacingAndGlyphs" fontSize="17.5">167.39K (26.07%)</text>
              <text x="1521" y="423.5" textLength="60" lengthAdjust="spacingAndGlyphs" fontSize="18.5">Seattle</text>
            </g>
            <circle cx="1511" cy="417" r="7.7" fill="#E66C37" />
            <path d="M1582 388q4 4 8 0" fill="none" stroke="#666" strokeWidth="1.5" />
          </svg>
        </div>
        <ScatterTile />
      </div>
      <div className="mt-[339px] h-[355px] w-3 bg-[#c1c1c1]" />
    </div>
  );
}

/* ---------------------------------------------------------------- taskbar */

function Slot({ children }: { children: React.ReactNode }) {
  return <div className="flex h-[60px] w-[66.2px] shrink-0 items-center justify-center">{children}</div>;
}

function Taskbar() {
  return (
    <footer className="flex h-[72px] border-t-2 border-[#454545] bg-[#262626] text-white">
      <div className="relative ml-[34px] mt-4 h-9 w-7">
        <svg width="28" height="36" viewBox="0 0 28 36"><rect width="28" height="36" rx="3" fill="#3eb4f2" /><path d="M3 12h6v11H3zM11 19h5v4h-5zM18 16h6v7h-6z" fill="#0b67b5" /><path d="M3 25.500h13v3H3zM18 25.500h6v3h-6zM3 31h21v2.500H3z" fill="#fff" /></svg>
        <div className="absolute -top-[8px] left-[13px] flex h-6 w-6 items-center justify-center rounded-full bg-[#ff99a4] text-[16px] text-black">1</div>
      </div>
      <div className="ml-[435px] mt-1 flex">
        <Slot><svg width="35" height="35" viewBox="0 0 35 35"><defs><linearGradient id="win" x1="0" y1="0" x2="1" y2="1"><stop stopColor="#7cecff" /><stop offset="1" stopColor="#0f96f8" /></linearGradient></defs><path d="M1 0h15.900v16.900H0V1q0-1 1-1zM18.100 0H34q1 0 1 1v15.900H18.100zM0 18.100h16.900V35H1q-1 0-1-1zM18.100 18.100H35V34q0 1-1 1H18.100z" fill="url(#win)" /></svg></Slot>
        <Slot><Icon size={34} vb="0 0 34 34" className="ml-[3px]"><circle cx="15" cy="14.5" r="12.5" fill="#454545" stroke="#e9edf0" strokeWidth="2.8" /><path d="m24 24 7 7.500" stroke="#d5dce0" strokeWidth="4" strokeLinecap="round" /></Icon></Slot>
        <Slot><svg width="36" height="34" viewBox="0 0 36 34" className="ml-[3px]"><rect x="9" width="27" height="25" rx="1.5" fill="#f2f2f2" /><rect y="9" width="27" height="25" rx="1.5" fill="#666" /><path d="M9 9h18v16H9z" fill="#bcbcbc" /></svg></Slot>
        <Slot><svg width="34" height="31" viewBox="0 0 34 31" className="ml-[3px]"><defs><linearGradient id="cpa" x1="0" y1="0" x2="0" y2="1"><stop stopColor="#1590f0" /><stop offset=".35" stopColor="#1583d0" /><stop offset=".65" stopColor="#4cb06c" /><stop offset="1" stopColor="#ffd21a" /></linearGradient><linearGradient id="cpb" x1="0" y1="0" x2="0" y2="1"><stop stopColor="#a14df0" /><stop offset=".45" stopColor="#f0609c" /><stop offset="1" stopColor="#ffa04c" /></linearGradient></defs>
          <path d="M14 0h7q3 0 4 3l1.800 5H22q-3 0-4 3z" fill="#1b49d8" /><path d="M20 31h-7q-3 0-4-3l-1.500-5.500H12q3 0 4-3z" fill="#f4502f" />
          <path d="M9.500 0H20q-3 0-4 4l-4 14q-1.300 4-5.500 4H3q-4.500 0-2.500-6L4.500 4Q6 0 9.500 0z" fill="url(#cpa)" /><path d="M24.500 31H14q3 0 4-4l4-14.500Q23.300 8 27.500 8H31q4.500 0 2.500 6.500l-4 12.500q-1.500 4-5 4z" fill="url(#cpb)" /></svg></Slot>
        <Slot><svg width="36" height="33" viewBox="0 0 36 33" className="ml-[3px]"><circle cx="18.5" cy="5.5" r="5.5" fill="#7b83eb" /><circle cx="29.5" cy="7" r="4" fill="#5059c9" /><path d="M25 13h9q1.500 0 1.500 1.500V21a7 7 0 0 1-9.500 6z" fill="#5059c9" /><path d="M10 12.500h17.500V24a9 9 0 0 1-17.500 2z" fill="#7b83eb" /><rect y="7" width="18" height="18.5" rx="1.5" fill="#464eb8" /><path d="M4.500 12h9M9 12v9.500" stroke="#eee" strokeWidth="2.2" /></svg></Slot>
        <Slot><svg width="36" height="36" viewBox="0 0 36 36" className="ml-px"><path d="M0 6q0-1.500 1.500-1.500h33Q36 4.500 36 6v25q0 5-5 5H5q-5 0-5-5z" fill="#f0f0f0" /><path d="M10 12.500h7v7h-7z" fill="#f25022" /><path d="M18.300 12.500h7v7h-7z" fill="#7fba00" /><path d="M10 20.800h7v7h-7z" fill="#00a4ef" /><path d="M18.300 20.800h7v7h-7z" fill="#ffb900" /><path d="M9 7V1h18v6" fill="none" stroke="#22a7e8" strokeWidth="2" /></svg></Slot>
        <Slot><svg width="36" height="28" viewBox="0 0 36 28" className="mb-1 ml-0.5"><rect width="36" height="28" rx="1.5" fill="#444" /><path d="M0 5V1.500Q0 0 1.500 0H12v5z" fill="#ccc" /><path d="M12 0h12v5H12z" fill="#999" /><path d="M24 0h10.500Q36 0 36 1.500V5H24z" fill="#6a6a6a" /><path d="m5 9 7.500 6.500L5 22" fill="none" stroke="#d0d0d0" strokeWidth="3.4" /><path d="M17 19h12v4H17z" fill="#f4f4f4" /></svg></Slot>
        <Slot><FaWhatsapp size={41} color="#25d366" className="ml-0.5" /></Slot>
        <Slot><svg width="36" height="36" viewBox="0 0 36 36" className="ml-px"><defs><linearGradient id="ed" x1="0" y1="0" x2="1" y2=".6"><stop stopColor="#2bb3e8" /><stop offset="1" stopColor="#5be05c" /></linearGradient></defs><path d="M0 18A18 18 0 0 1 36 15.500c0 6-4 8.500-8.500 8.500-4 0-6-2-4.500-4.500 1.500-3-1-7-5-7C10 12.500 7 18 8 24z" fill="url(#ed)" /><path d="M0 18c0-7 6-10 12-9 5 .5 10 3 10 7-4-4-9-1-9 5 0 7 9 11 19 6.500A18 18 0 0 1 0 18z" fill="#1b7fd6" /><path d="M13 12c-6 5-6 17 4 24 7 0 13-4 16-8-9 4.500-20 0-20-9 0-3 1-5 3-6z" fill="#0f5aa8" /></svg></Slot>
        <Slot><svg width="36" height="34" viewBox="0 0 36 34"><path d="M0 3q0-3 3-3h9l4 4v6H0z" fill="#e6a010" /><path d="M0 6h14l4-3h16q2 0 2 2v26q0 2-2 2H2q-2 0-2-2z" fill="#ffd257" /><path d="M6 33v-8q0-3 3-3h18q3 0 3 3v8z" fill="#1879c9" /><path d="M11 28h14" stroke="#0c5396" strokeWidth="2" /></svg></Slot>
        <Slot><Chrome size={36} /></Slot>
        <Slot><svg width="32" height="32" viewBox="0 0 32 32"><path d="M0 1q0-1 1-1h30q1 0 1 1v30q0 1-1 1H1q-1 0-1-1z" fill="#ffd60a" /><path d="M16 17h16L16 32z" fill="#484848" /><path d="M32 17v15H16z" fill="#f0ad0c" /></svg></Slot>
        <div className="relative flex h-[60px] w-[66.2px] items-center justify-center">
          <div className="absolute left-[3px] top-0 h-[60px] w-[52px] rounded-md border border-[#414141] bg-[#333]" />
          <div className="absolute left-[52px] top-0 h-[60px] w-[9px] rounded-r-md border-r-2 border-[#474747]" />
          <div className="relative"><Chrome size={36} /></div>
          <div className="absolute left-[35px] top-[5px] flex h-6 w-6 items-center justify-center rounded-full bg-[#c2185b] font-[Roboto] text-[14px] text-pink-200">S</div>
          <div className="absolute bottom-px left-[21px] h-[5px] w-6 rounded-full bg-[#f8665f]" />
        </div>
        <div className="relative flex h-[60px] w-[66.2px] items-center justify-center">
          <PowerBI w={28} h={36} className="-ml-px" />
          <div className="absolute bottom-px left-[29px] h-[5px] w-[9px] rounded-full bg-[#9a9a9a]" />
        </div>
      </div>
      <div className="mb-[2px] ml-auto mr-[30px] flex items-center">
        <Icon w={16} h={10} vb="0 0 16 10"><path d="m1 9 7-7 7 7" strokeWidth="2" /></Icon>
        <div className="ml-[31px] flex w-[36px] flex-col items-center text-[17px] leading-[23px]"><Fit w={35}>ENG</Fit><Fit w={18}>IN</Fit></div>
        <Icon w={24} h={18} vb="0 0 24 18" className="ml-[27px]"><g strokeWidth="1.8"><path d="M1 7.500a15.500 15.500 0 0 1 22 0M4.500 11a10.500 10.500 0 0 1 15 0M8 14a6 6 0 0 1 8 0" /></g><circle cx="12" cy="16" r="1.9" fill="#fff" stroke="none" /></Icon>
        <Icon w={24} h={20} vb="0 0 24 20" className="ml-3"><path d="M1 7h4l6-5.500v17L5 13H1z" strokeWidth="1.7" strokeLinejoin="round" /><path d="M14 6.500q3 3.500 0 7M17 4q5 6 0 12" strokeWidth="1.6" /><path d="M20 1.500q6 8.500 0 17" stroke="#777" strokeWidth="1.5" /></Icon>
        <Icon w={24} h={20} vb="0 0 24 20" className="ml-[11px]"><rect x="3" y="5" width="17" height="13.5" rx="3" strokeWidth="1.8" /><rect x="6" y="8" width="11" height="7.5" fill="#fff" stroke="none" /><path d="M21.500 9.500h1.500v5h-1.500z" fill="#fff" stroke="none" /><path d="M5.500 0 0 8h3.500L2 13l6-8H4.500z" fill="#fff" stroke="#262626" strokeWidth=".7" /></Icon>
        <div className="ml-[24px] flex w-[94px] flex-col items-end text-[17px] leading-[24px]"><Fit w={43}>20:36</Fit><Fit w={93}>13-01-2025</Fit></div>
        <Icon size={23} vb="0 0 23 23" className="ml-3"><path d="M3 11a7 7 0 0 1 14 0v4l2.500 3.500H.5L3 15zM7 20h6a3 3 0 0 1-6 0z" fill="#fff" stroke="none" /><path d="M13 0h8v9h-8z" fill="#262626" stroke="none" /><path d="M15 1.500h4.500L15 7h5" strokeWidth="1.6" /><path d="M7 8.500h4L7 13.500h4.500" stroke="#262626" strokeWidth="1.5" /></Icon>
      </div>
    </footer>
  );
}

export default function App() {
  return (
    <div className="flex h-[1080px] w-[1920px] flex-col overflow-hidden font-['Open_Sans','Noto_Sans',sans-serif]">
      <div className="h-[182px] border-b-2 border-[#555] bg-[linear-gradient(to_bottom,#202020_0px,#1b1b1b_10px,#1a1a1a_60px,#030303_92px)]">
        <TabStrip />
        <Toolbar />
        <Bookmarks />
      </div>
      <div className="h-[826px] bg-[#efefef]">
        <AppHeader />
        <div className="flex">
          <Sidebar />
          <main className="h-[754px] w-[1818px] shadow-[0_0_6px_rgba(0,0,0,0.25)]">
            <CommandBar />
            <Dashboard />
          </main>
        </div>
      </div>
      <Taskbar />
    </div>
  );
}
